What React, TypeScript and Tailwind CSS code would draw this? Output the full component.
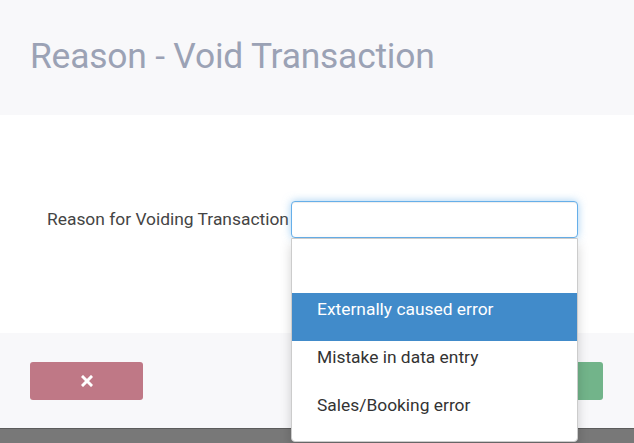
import { useState } from "react";

const reasons = ["", "Externally caused error", "Mistake in data entry", "Sales/Booking error"];

export default function App() {
  const [selected, setSelected] = useState(1);

  return (
    <div className="relative h-[443px] w-[634px] overflow-hidden bg-[#787878] font-['Roboto',sans-serif]">
      <div className="flex h-[429px] flex-col border-b border-[#5c5c5c]">
        {/* header */}
        <div className="flex h-[115px] items-center bg-[#f8f8fa] px-[30px] pb-[2px]">
          <h1 className="text-[35.4px] font-normal leading-none tracking-[-0.2px] text-[#9ba2b5]">
            Reason - Void Transaction
          </h1>
        </div>

        {/* body */}
        <div className="h-[218px] bg-white pt-[86px]">
          <div className="flex items-center pl-[47px]">
            <label className="w-[244px] whitespace-nowrap text-[17.4px] text-[#444444]">
              Reason for Voiding Transaction
            </label>
            <div className="relative">
              <div className="h-[37px] w-[287px] rounded-[4px] border border-[#66afe9] bg-white shadow-[inset_0_1px_1px_rgba(0,0,0,0.075),0_0_8px_rgba(102,175,233,0.6)]" />
              {/* open dropdown list */}
              <ul className="absolute left-0 top-[37px] z-10 w-[287px] rounded-b-[4px] border border-[#cccccc] bg-white pb-[4px] pt-[6px] shadow-[0_6px_12px_rgba(0,0,0,0.175)]">
                {reasons.map((r, i) => (
                  <li
                    key={i}
                    onMouseEnter={() => setSelected(i)}
                    className={
                      i === selected
                        ? "h-[48px] bg-[#418bca] pl-[25px] pt-[5px] text-[17.4px] leading-[22px] text-white"
                        : "h-[48px] pl-[25px] pt-[5px] text-[17.4px] leading-[22px] text-[#333333]"
                    }
                  >
                    {r}
                  </li>
                ))}
              </ul>
            </div>
          </div>
        </div>

        {/* footer */}
        <div className="flex flex-1 items-start justify-between bg-[#f8f8fa] px-[30px] pt-[29px] pr-[31px]">
          <button className="flex h-[38px] w-[113px] items-center justify-center rounded-[3px] bg-[#bf7886]">
            <svg width="12" height="12" viewBox="0 0 12 12">
              <path d="M2 2 L10 10 M10 2 L2 10" stroke="white" strokeWidth="3" strokeLinecap="square" />
            </svg>
          </button>
          <button className="flex h-[38px] w-[113px] items-center justify-center rounded-[3px] bg-[#72b48a]" />
        </div>
      </div>
    </div>
  );
}
